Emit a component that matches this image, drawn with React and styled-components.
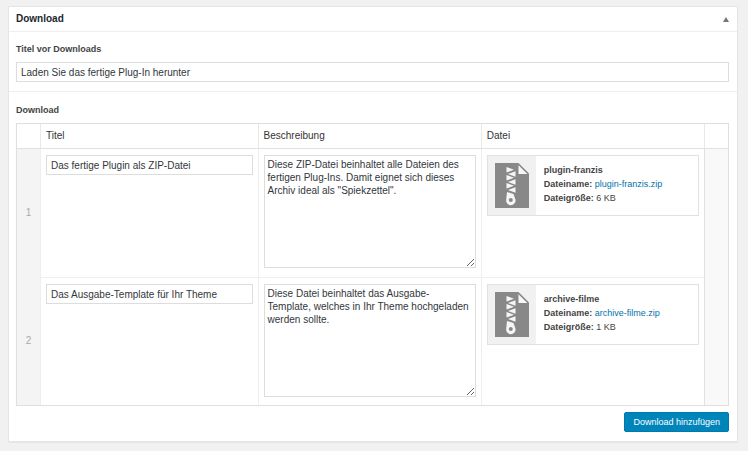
import React, { useState } from "react";
import styled, { createGlobalStyle } from "styled-components";

const GlobalStyle = createGlobalStyle`
  * { box-sizing: border-box; }
  body {
    margin: 0;
    background: #f1f1f1;
    color: #444;
    font-family: "Liberation Sans", Arial, sans-serif;
    font-size: 10px;
    line-height: 14px;
  }
  input, textarea, button { font: inherit; }
`;

const Page = styled.main`
  padding: 6px 10px 9px 8px;
`;

const Panel = styled.section`
  background: #fff;
  border: 1px solid #e5e5e5;
  box-shadow: 0 1px 1px rgba(0, 0, 0, 0.04);
`;

const PanelHeader = styled.header`
  display: flex;
  align-items: center;
  justify-content: space-between;
  height: 25px;
  padding: 0 7px;
  border-bottom: 1px solid #eee;
`;

const PanelTitle = styled.h2`
  margin: 0;
  color: #23282d;
  font-size: 10px;
  font-weight: 700;
`;

const Toggle = styled.button`
  display: flex;
  padding: 1px;
  border: 0;
  background: none;
  color: #72777c;
`;

const Field = styled.div`
  padding: 10px 8px 9px 7px;
  & + & {
    padding-top: 11px;
    border-top: 1px solid #eee;
  }
`;

const Label = styled.label`
  display: block;
  margin-bottom: 6px;
  font-size: 9px;
  font-weight: 700;
`;

const TextInput = styled.input`
  display: block;
  width: 100%;
  height: 20px;
  padding: 0 4px;
  border: 1px solid #ddd;
  background: #fff;
  color: #32373c;
  outline: 0;
`;

const TextArea = styled.textarea`
  display: block;
  width: 100%;
  height: 113px;
  padding: 2px 3px;
  border: 1px solid #ddd;
  background: #fff;
  color: #32373c;
  line-height: 13px;
  outline: 0;
  overflow: auto;
  resize: vertical;
`;

const Table = styled.table`
  width: 100%;
  table-layout: fixed;
  border-collapse: separate;
  border-spacing: 0;
  border: 1px solid #dfdfdf;
`;

const Column = styled.col`
  width: ${(p) => p.$width};
`;

const HeadCell = styled.th`
  height: 25px;
  padding: 0 5px;
  border-bottom: 1px solid #e1e1e1;
  color: #333;
  font-weight: 400;
  text-align: left;
  & + & { border-left: 1px solid #e8e8e8; }
`;

const Cell = styled.td`
  height: 128px;
  padding: 6px 5px 8px;
  border-left: 1px solid #eee;
  vertical-align: top;
  tr + tr > & { border-top: 1px solid #eee; }
`;

const SideCell = styled.td`
  padding: 0;
  background: ${(p) => (p.$shade === "order" ? "#f4f4f4" : "#f9f9f9")};
  color: #aaa;
  text-align: center;
  vertical-align: middle;
  ${Cell} + & { border-left: 1px solid #e1e1e1; }
`;

const FileCard = styled.div`
  display: flex;
  height: 61px;
  border: 1px solid #e1e1e1;
  background: #fff;
`;

const FileThumb = styled.div`
  display: flex;
  flex: none;
  align-items: center;
  justify-content: center;
  width: 48px;
  background: #f1f1f1;
`;

const FileInfo = styled.div`
  padding: 7px 8px;
  font-size: 9px;
  white-space: nowrap;
`;

const FileLine = styled.p`
  margin: 0;
`;

const FileLink = styled.a`
  color: #0073aa;
  text-decoration: none;
`;

const Actions = styled.div`
  display: flex;
  justify-content: flex-end;
  margin-top: 6px;
`;

const PrimaryButton = styled.button`
  height: 20px;
  padding: 0 8px;
  border: 1px solid #0079ad;
  border-radius: 2px;
  background: #0085ba;
  color: #fff;
  font-size: 9px;
`;

function ZipIcon() {
  return (
    <svg width="34" height="45" viewBox="0 0 34 45" aria-hidden="true">
      <path fill="#888" d="M0 0h23.500L34 10.500V45H0z" />
      <path fill="#f8f8f8" d="M23.500 2.200V11h8.800z" />
      <g fill="#f6f6f6">
        <path d="M11.500 4v5.600l7.500-2.800zM11.500 12v5.600l7.500-2.800zM11.500 20v5.600l7.500-2.800z" />
        <path d="M20.500 8.200v5.600L13 11zM20.500 16.200v5.600L13 19zM20.500 24.200v5.600L13 27z" />
        <path
          fillRule="evenodd"
          d="M12 29l6.500 2 2 5.700a4.700 4.900 0 1 1-9.300 0zM15.800 35a2 2 0 1 0 0 4 2 2 0 0 0 0-4z"
        />
      </g>
    </svg>
  );
}

const initialRows = [
  {
    title: "Das fertige Plugin als ZIP-Datei",
    text: 'Diese ZIP-Datei beinhaltet alle Dateien des fertigen Plug-Ins. Damit eignet sich dieses Archiv ideal als "Spiekzettel".',
    name: "plugin-franzis",
    file: "plugin-franzis.zip",
    size: "6 KB",
  },
  {
    title: "Das Ausgabe-Template für Ihr Theme",
    text: "Diese Datei beinhaltet das Ausgabe-Template, welches in Ihr Theme hochgeladen werden sollte.",
    name: "archive-filme",
    file: "archive-filme.zip",
    size: "1 KB",
  },
];

function DownloadRow({ number, row }) {
  return (
    <tr>
      <SideCell $shade="order">{number}</SideCell>
      <Cell>
        <TextInput aria-label={`Titel ${number}`} defaultValue={row.title} />
      </Cell>
      <Cell>
        <TextArea
          aria-label={`Beschreibung ${number}`}
          defaultValue={row.text}
          spellCheck={false}
        />
      </Cell>
      <Cell>
        {row.file && (
          <FileCard>
            <FileThumb>
              <ZipIcon />
            </FileThumb>
            <FileInfo>
              <FileLine>
                <strong>{row.name}</strong>
              </FileLine>
              <FileLine>
                <strong>Dateiname:</strong>{" "}
                <FileLink href={`#${row.file}`}>{row.file}</FileLink>
              </FileLine>
              <FileLine>
                <strong>Dateigröße:</strong> {row.size}
              </FileLine>
            </FileInfo>
          </FileCard>
        )}
      </Cell>
      <SideCell />
    </tr>
  );
}

export default function App() {
  const [open, setOpen] = useState(true);
  const [rows, setRows] = useState(initialRows);

  return (
    <>
      <GlobalStyle />
      <Page>
        <Panel>
          <PanelHeader>
            <PanelTitle>Download</PanelTitle>
            <Toggle
              type="button"
              aria-label="Download ein- oder ausklappen"
              aria-expanded={open}
              onClick={() => setOpen(!open)}
            >
              <svg width="6" height="5" viewBox="0 0 6 5" aria-hidden="true">
                <path d="M3 0 6 5H0z" fill="currentColor" />
              </svg>
            </Toggle>
          </PanelHeader>
          {open && (
            <>
              <Field>
                <Label htmlFor="heading">Titel vor Downloads</Label>
                <TextInput
                  id="heading"
                  defaultValue="Laden Sie das fertige Plug-In herunter"
                />
              </Field>
              <Field>
                <Label as="div" id="downloads">
                  Download
                </Label>
                <Table aria-labelledby="downloads">
                  <colgroup>
                    <Column $width="23px" />
                    <Column $width="30.6%" />
                    <Column $width="31.4%" />
                    <Column />
                    <Column $width="24px" />
                  </colgroup>
                  <thead>
                    <tr>
                      <HeadCell />
                      <HeadCell scope="col">Titel</HeadCell>
                      <HeadCell scope="col">Beschreibung</HeadCell>
                      <HeadCell scope="col">Datei</HeadCell>
                      <HeadCell />
                    </tr>
                  </thead>
                  <tbody>
                    {rows.map((row, i) => (
                      <DownloadRow key={i} number={i + 1} row={row} />
                    ))}
                  </tbody>
                </Table>
                <Actions>
                  <PrimaryButton
                    type="button"
                    onClick={() => setRows([...rows, { title: "", text: "" }])}
                  >
                    Download hinzufügen
                  </PrimaryButton>
                </Actions>
              </Field>
            </>
          )}
        </Panel>
      </Page>
    </>
  );
}
